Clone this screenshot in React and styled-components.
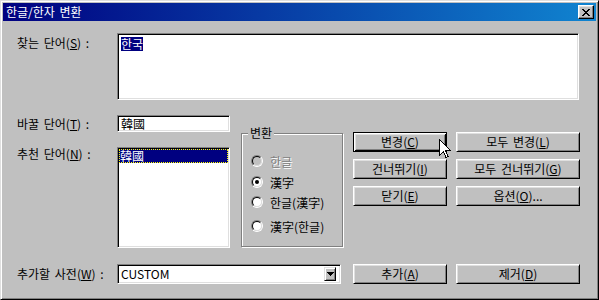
import React from "react";
import styled, { createGlobalStyle } from "styled-components";

const Global = createGlobalStyle`
  html, body { margin: 0; padding: 0; background: #c0c0c0; }
  body { font-family: "Noto Sans CJK KR", "Noto Sans", sans-serif; font-size: 12px; color: #000; word-spacing: 2px; }
  * { box-sizing: border-box; }
  u { text-decoration: underline; text-underline-offset: 1px; }
`;

const Window = styled.div`
  position: relative;
  width: 599px;
  height: 300px;
  background: #c0c0c0;
  border: 1px solid;
  border-color: #dfdfdf #000 #000 #dfdfdf;
  box-shadow: inset 1px 1px #fff, inset -1px -1px #808080;
  padding: 2px;
  display: flex;
  flex-direction: column;
`;

const TitleBar = styled.div`
  height: 18px;
  display: flex;
  align-items: center;
  justify-content: space-between;
  padding: 0 2px 0 3px;
  background: linear-gradient(90deg, #000080 0%, #1084d0 100%);
  color: #fff;
  font-size: 12px;
  line-height: 18px;
`;

const CloseBtn = styled.div`
  width: 16px;
  height: 14px;
  background: #c0c0c0;
  border: 1px solid;
  border-color: #fff #000 #000 #fff;
  box-shadow: inset -1px -1px #808080, inset 1px 1px #dfdfdf;
  display: flex;
  align-items: center;
  justify-content: center;
`;

const Content = styled.div`
  padding: 12px 16px 0 13px;
  display: flex;
  flex-direction: column;
`;

const Row = styled.div`
  display: flex;
  align-items: ${(p) => p.$align || "flex-start"};
  margin-top: ${(p) => p.$mt || 0}px;
`;

const Label = styled.div`
  width: 101px;
  flex: none;
  line-height: 14px;
  white-space: nowrap;
  padding-top: ${(p) => p.$pt || 0}px;
  padding-left: 1px;
`;

const Sunken = styled.div`
  flex: none;
  width: ${(p) => p.$w}px;
  height: ${(p) => p.$h}px;
  background: #fff;
  border: 1px solid;
  border-color: #808080 #fff #fff #808080;
  box-shadow: inset 1px 1px #000, inset -1px -1px #dfdfdf;
  padding: ${(p) => p.$pad || "3px 3px 2px 3px"};
  line-height: 14px;
  position: relative;
`;

const Selected = styled.span`
  background: #000080;
  color: #fff;
  display: inline-block;
  line-height: 14px;
`;

const ListSel = styled.div`
  margin: -1px -1px 0 -1px;
  background: #000080;
  color: #fff;
  height: 14px;
  line-height: 13px;
  outline: 1px dotted #ffff00;
  outline-offset: -1px;
  padding-left: 1px;
`;

const LeftCol = styled.div`
  width: 214px;
  flex: none;
  display: flex;
  flex-direction: column;
`;

const GroupBox = styled.div`
  position: relative;
  flex: none;
  width: 102px;
  height: 114px;
  margin: 18px 0 0 11px;
  border: 1px solid #808080;
  box-shadow: 1px 1px 0 #fff, inset 1px 1px 0 #fff;
  padding: 20px 0 0 9px;
  display: flex;
  flex-direction: column;
`;

const Legend = styled.div`
  position: absolute;
  top: -8px;
  left: 6px;
  padding: 0 2px;
  background: #c0c0c0;
  line-height: 14px;
`;

const RadioRow = styled.div`
  display: flex;
  align-items: center;
  height: 14px;
  margin-top: ${(p) => p.$mt || 0}px;
  color: ${(p) => (p.$disabled ? "#808080" : "#000")};
  text-shadow: ${(p) => (p.$disabled ? "1px 1px 0 #fff" : "none")};
  white-space: nowrap;
`;

const RadioOuter = styled.div`
  width: 12px;
  height: 12px;
  border-radius: 50%;
  border: 1px solid;
  border-color: #808080 #fff #fff #808080;
  margin-right: 7px;
  flex: none;
`;

const RadioInner = styled.div`
  width: 10px;
  height: 10px;
  border-radius: 50%;
  border: 1px solid;
  border-color: #000 #dfdfdf #dfdfdf #000;
  background: ${(p) => (p.$disabled ? "#c0c0c0" : "#fff")};
  display: flex;
  align-items: center;
  justify-content: center;
`;

const Dot = styled.div`
  width: 4px;
  height: 4px;
  border-radius: 50%;
  background: #000;
`;

const ButtonGrid = styled.div`
  margin: 17px 0 0 10px;
  display: grid;
  grid-template-columns: 94px 124px;
  grid-auto-rows: 20px;
  column-gap: 9px;
  row-gap: 7px;
`;

const Button = styled.div`
  width: ${(p) => (p.$w ? `${p.$w}px` : "auto")};
  height: 20px;
  flex: none;
  display: flex;
  align-items: center;
  justify-content: center;
  line-height: 14px;
  background: #c0c0c0;
  white-space: nowrap;
  border: 1px solid;
  border-color: ${(p) => (p.$default ? "#000" : "#fff #000 #000 #fff")};
  box-shadow: ${(p) =>
    p.$default
      ? "inset 1px 1px #fff, inset -1px -1px #000, inset 2px 2px #dfdfdf, inset -2px -2px #808080"
      : "inset 1px 1px #dfdfdf, inset -1px -1px #808080"};
  margin-left: ${(p) => p.$ml || 0}px;
`;

const Combo = styled.div`
  flex: none;
  width: 224px;
  height: 20px;
  background: #fff;
  border: 1px solid;
  border-color: #808080 #fff #fff #808080;
  box-shadow: inset 1px 1px #000, inset -1px -1px #dfdfdf;
  display: flex;
  align-items: center;
  justify-content: space-between;
  padding: 0 4px 0 3px;
  line-height: 14px;
`;

const DropBtn = styled.div`
  width: 12px;
  height: 14px;
  background: #c0c0c0;
  border: 1px solid;
  border-color: #dfdfdf #000 #000 #dfdfdf;
  box-shadow: inset 1px 1px #fff, inset -1px -1px #808080;
  display: flex;
  align-items: center;
  justify-content: center;
`;

const Cursor = styled.svg`
  position: absolute;
  left: 438px;
  top: 138px;
`;

const Radio = ({ checked, disabled, children, mt }) => (
  <RadioRow $disabled={disabled} $mt={mt}>
    <RadioOuter>
      <RadioInner $disabled={disabled}>{checked && <Dot />}</RadioInner>
    </RadioOuter>
    <span>{children}</span>
  </RadioRow>
);

export default function App() {
  return (
    <>
      <Global />
      <Window>
        <TitleBar>
          <span>한글/한자 변환</span>
          <CloseBtn>
            <svg width="8" height="7" viewBox="0 0 8 7" shapeRendering="crispEdges">
              <path
                d="M0 0h2v1h1v1h2V1h1V0h2v1H7v1H6v1H5v1h1v1h1v1h1v1H6V6H5V5H3v1H2v1H0V6h1V5h1V4h1V3H2V2H1V1H0z"
                fill="#000"
              />
            </svg>
          </CloseBtn>
        </TitleBar>
        <Content>
          <Row>
            <Label $pt={3}>
              찾는 단어(<u>S</u>) :
            </Label>
            <Sunken $w={462} $h={67}>
              <Selected>한국</Selected>
            </Sunken>
          </Row>
          <Row $mt={15}>
            <LeftCol>
              <Row $align="center">
                <Label>
                  바꿀 단어(<u>T</u>) :
                </Label>
                <Sunken $w={113} $h={17} $pad="1px 3px 0 3px">
                  韓國
                </Sunken>
              </Row>
              <Row $mt={15}>
                <Label>
                  추천 단어(<u>N</u>) :
                </Label>
                <Sunken $w={113} $h={101} $pad="2px">
                  <ListSel>韓國</ListSel>
                </Sunken>
              </Row>
            </LeftCol>
            <GroupBox>
              <Legend>변환</Legend>
              <Radio disabled>한글</Radio>
              <Radio checked mt={7}>
                漢字
              </Radio>
              <Radio mt={6}>한글(漢字)</Radio>
              <Radio mt={10}>漢字(한글)</Radio>
            </GroupBox>
            <ButtonGrid>
              <Button $default>
                변경(<u>C</u>)
              </Button>
              <Button>
                모두 변경(<u>L</u>)
              </Button>
              <Button>
                건너뛰기(<u>I</u>)
              </Button>
              <Button>
                모두 건너뛰기(<u>G</u>)
              </Button>
              <Button>
                닫기(<u>E</u>)
              </Button>
              <Button>
                옵션(<u>O</u>)...
              </Button>
            </ButtonGrid>
          </Row>
          <Row $mt={16} $align="center">
            <Label>
              추가할 사전(<u>W</u>) :
            </Label>
            <Combo>
              <span>CUSTOM</span>
              <DropBtn>
                <svg width="7" height="4" viewBox="0 0 7 4" shapeRendering="crispEdges">
                  <path d="M0 0h7v1H6v1H5v1H4v1H3V3H2V2H1V1H0z" fill="#000" />
                </svg>
              </DropBtn>
            </Combo>
            <Button $w={94} $ml={12}>
              추가(<u>A</u>)
            </Button>
            <Button $w={124} $ml={9}>
              제거(<u>D</u>)
            </Button>
          </Row>
        </Content>
        <Cursor width="13" height="21" viewBox="0 0 13 21" shapeRendering="crispEdges">
          <path
            d="M0.5 0.5 L0.5 16.5 L4.5 12.5 L7 18.5 L9 17.5 L6.5 11.5 L11.5 11.5 Z"
            fill="#fff"
            stroke="#000"
            strokeWidth="1"
          />
        </Cursor>
      </Window>
    </>
  );
}
